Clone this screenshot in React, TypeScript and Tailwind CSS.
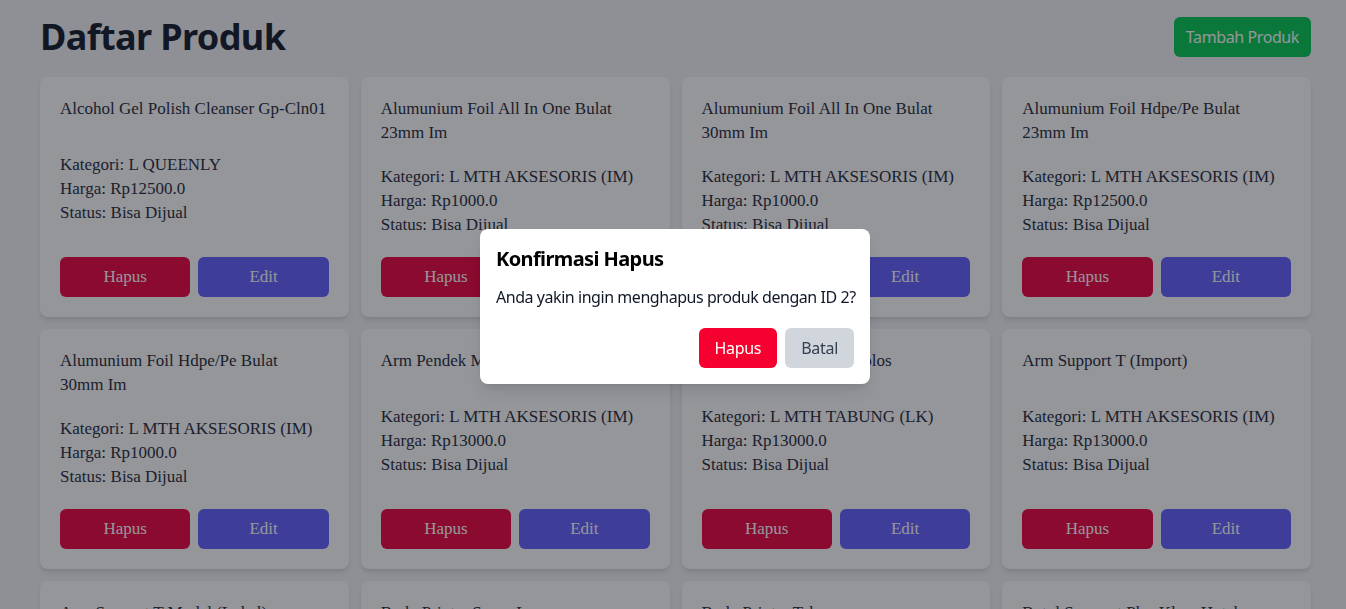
import React from "react";

type Product = { id: number; name: string; kategori: string; harga: string; status: string };

const products: Product[] = [
  { id: 1, name: "Alcohol Gel Polish Cleanser Gp-Cln01", kategori: "L QUEENLY", harga: "Rp12500.0", status: "Bisa Dijual" },
  { id: 2, name: "Alumunium Foil All In One Bulat 23mm Im", kategori: "L MTH AKSESORIS (IM)", harga: "Rp1000.0", status: "Bisa Dijual" },
  { id: 3, name: "Alumunium Foil All In One Bulat 30mm Im", kategori: "L MTH AKSESORIS (IM)", harga: "Rp1000.0", status: "Bisa Dijual" },
  { id: 4, name: "Alumunium Foil Hdpe/Pe Bulat\n23mm Im", kategori: "L MTH AKSESORIS (IM)", harga: "Rp12500.0", status: "Bisa Dijual" },
  { id: 5, name: "Alumunium Foil Hdpe/Pe Bulat\n30mm Im", kategori: "L MTH AKSESORIS (IM)", harga: "Rp1000.0", status: "Bisa Dijual" },
  { id: 6, name: "Arm Pendek Model (Import)", kategori: "L MTH AKSESORIS (IM)", harga: "Rp13000.0", status: "Bisa Dijual" },
  { id: 7, name: "Arm Pendek Model T Polos", kategori: "L MTH TABUNG (LK)", harga: "Rp13000.0", status: "Bisa Dijual" },
  { id: 8, name: "Arm Support T (Import)", kategori: "L MTH AKSESORIS (IM)", harga: "Rp13000.0", status: "Bisa Dijual" },
  { id: 9, name: "Arm Support T Model (Lokal)", kategori: "L MTH AKSESORIS (LK)", harga: "Rp13000.0", status: "Bisa Dijual" },
  { id: 10, name: "Body Printer Super Large", kategori: "L MTH AKSESORIS (IM)", harga: "Rp13000.0", status: "Bisa Dijual" },
  { id: 11, name: "Body Printer Tabung", kategori: "L MTH AKSESORIS (IM)", harga: "Rp13000.0", status: "Bisa Dijual" },
  { id: 12, name: "Botol Semprot Plas Klem Hutch", kategori: "L MTH AKSESORIS (IM)", harga: "Rp13000.0", status: "Bisa Dijual" },
];

function Card({ p }: { p: Product }) {
  return (
    <div className="h-[240px] bg-white rounded-lg shadow-md p-5 flex flex-col justify-between font-['Liberation_Serif',Georgia,serif] text-gray-800 text-[17px] leading-6">
      <h2 className="font-normal whitespace-pre-line">{p.name}</h2>
      <div>
        <p>Kategori: {p.kategori}</p>
        <p>Harga: {p.harga}</p>
        <p>Status: {p.status}</p>
      </div>
      <div className="flex gap-2">
        <button className="flex-1 h-10 rounded-md bg-[#ec003f] text-white">Hapus</button>
        <button className="flex-1 h-10 rounded-md bg-[#615fff] text-white">Edit</button>
      </div>
    </div>
  );
}

export default function App() {
  return (
    <div className="min-h-screen bg-gray-100 pl-10 pr-[35px] pt-[17px] font-['Noto_Sans',sans-serif]">
      <div className="flex items-center justify-between h-10 mb-5">
        <h1 className="text-4xl font-bold text-gray-900 tracking-[-0.6px]">Daftar Produk</h1>
        <button className="h-10 px-3 rounded-md bg-[#00c950] text-white text-base tracking-[-0.4px]">Tambah Produk</button>
      </div>
      <div className="grid grid-cols-4 gap-3">
        {products.map((p) => (
          <Card key={p.id} p={p} />
        ))}
      </div>

      <div className="fixed inset-0 bg-[rgba(20,22,30,0.45)] flex items-center justify-center">
        <div className="w-[390px] ml-[4px] mt-[4px] bg-white rounded-lg shadow-lg p-4 font-['Noto_Sans',sans-serif]">
          <h3 className="text-xl font-bold leading-7 text-black mb-3 tracking-[-0.6px]">Konfirmasi Hapus</h3>
          <p className="text-base leading-6 text-gray-900 mb-[19px] tracking-[-0.45px] whitespace-nowrap">Anda yakin ingin menghapus produk dengan ID 2?</p>
          <div className="flex justify-end gap-2">
            <button className="h-10 px-4 rounded-md bg-[#f5002f] text-white tracking-[-0.3px]">Hapus</button>
            <button className="h-10 px-4 rounded-md bg-gray-300 text-gray-700 tracking-[-0.3px]">Batal</button>
          </div>
        </div>
      </div>
    </div>
  );
}
